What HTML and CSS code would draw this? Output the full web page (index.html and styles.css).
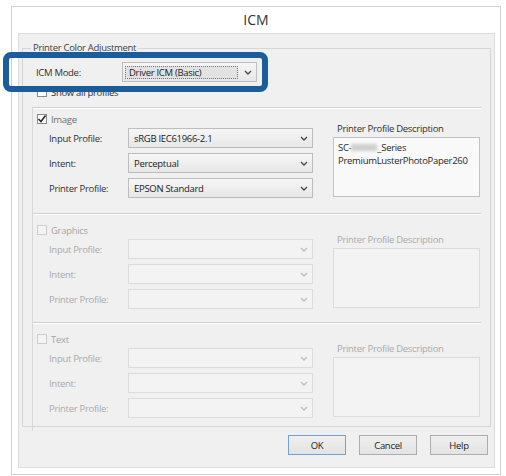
FILE: index.html
```html
<!DOCTYPE html>
<html>
<head>
    <title>ICM</title>
    <link rel="stylesheet" href="styles.css">
</head>
<body>
    <div class="window">
        <div class="titlebar">ICM</div>
        <div class="client">
            <fieldset class="group">
                <legend>Printer Color Adjustment</legend>
                <div class="mode-row">
                    <span class="mode-label">ICM Mode:</span>
                    <div class="combo mode-combo">
                        <span class="combo-text focused">Driver ICM (Basic)</span>
                        <svg class="chevron" width="8" height="5" viewBox="0 0 8 5"><polyline points="1,1 4,4 7,1"/></svg>
                    </div>
                </div>
                <div class="check-row show-all"><span class="box"></span>Show all profiles</div>

                <div class="sections">
                    <!-- Image -->
                    <div class="section image">
                        <div class="check-row heading"><span class="box">
                            <svg width="10" height="10" viewBox="0 0 10 10"><polyline points="1.5,5 4,7.5 8.5,1.5"/></svg>
                        </span>Image</div>
                        <div class="section-body">
                            <div class="fields">
                                <span class="field-label">Input Profile:</span>
                                <div class="combo"><span class="combo-text">sRGB IEC61966-2.1</span><svg class="chevron" width="8" height="5" viewBox="0 0 8 5"><polyline points="1,1 4,4 7,1"/></svg></div>
                                <span class="field-label">Intent:</span>
                                <div class="combo"><span class="combo-text">Perceptual</span><svg class="chevron" width="8" height="5" viewBox="0 0 8 5"><polyline points="1,1 4,4 7,1"/></svg></div>
                                <span class="field-label">Printer Profile:</span>
                                <div class="combo"><span class="combo-text">EPSON Standard</span><svg class="chevron" width="8" height="5" viewBox="0 0 8 5"><polyline points="1,1 4,4 7,1"/></svg></div>
                            </div>
                            <div class="desc">
                                <span class="desc-label">Printer Profile Description</span>
                                <div class="desc-box">SC-<span class="smudge"></span>_Series<br>PremiumLusterPhotoPaper260</div>
                            </div>
                        </div>
                    </div>

                    <!-- Graphics -->
                    <div class="section disabled">
                        <div class="check-row heading"><span class="box"></span>Graphics</div>
                        <div class="section-body">
                            <div class="fields">
                                <span class="field-label">Input Profile:</span>
                                <div class="combo"><span class="combo-text"></span><svg class="chevron" width="8" height="5" viewBox="0 0 8 5"><polyline points="1,1 4,4 7,1"/></svg></div>
                                <span class="field-label">Intent:</span>
                                <div class="combo"><span class="combo-text"></span><svg class="chevron" width="8" height="5" viewBox="0 0 8 5"><polyline points="1,1 4,4 7,1"/></svg></div>
                                <span class="field-label">Printer Profile:</span>
                                <div class="combo"><span class="combo-text"></span><svg class="chevron" width="8" height="5" viewBox="0 0 8 5"><polyline points="1,1 4,4 7,1"/></svg></div>
                            </div>
                            <div class="desc">
                                <span class="desc-label">Printer Profile Description</span>
                                <div class="desc-box"></div>
                            </div>
                        </div>
                    </div>

                    <!-- Text -->
                    <div class="section disabled">
                        <div class="check-row heading"><span class="box"></span>Text</div>
                        <div class="section-body">
                            <div class="fields">
                                <span class="field-label">Input Profile:</span>
                                <div class="combo"><span class="combo-text"></span><svg class="chevron" width="8" height="5" viewBox="0 0 8 5"><polyline points="1,1 4,4 7,1"/></svg></div>
                                <span class="field-label">Intent:</span>
                                <div class="combo"><span class="combo-text"></span><svg class="chevron" width="8" height="5" viewBox="0 0 8 5"><polyline points="1,1 4,4 7,1"/></svg></div>
                                <span class="field-label">Printer Profile:</span>
                                <div class="combo"><span class="combo-text"></span><svg class="chevron" width="8" height="5" viewBox="0 0 8 5"><polyline points="1,1 4,4 7,1"/></svg></div>
                            </div>
                            <div class="desc">
                                <span class="desc-label">Printer Profile Description</span>
                                <div class="desc-box"></div>
                            </div>
                        </div>
                    </div>
                </div>
            </fieldset>

            <div class="buttons">
                <button class="btn default">OK</button>
                <button class="btn">Cancel</button>
                <button class="btn">Help</button>
            </div>
        </div>
    </div>

    <div class="highlight"></div>
</body>
</html>
```

FILE: styles.css
```css
body {
    margin: 0;
    background-color: #fff;
    font-family: "Open Sans", "Noto Sans", sans-serif;
    font-size: 9.5px;
    letter-spacing: -0.3px;
    color: #303030;
}
.window {
    margin: 6px 0 0 11px;
    width: 490px;
    height: 469px;
    box-sizing: border-box;
    border: 1px solid #d2d2d2;
    background-color: #fff;
    display: flex;
    flex-direction: column;
}
.titlebar {
    height: 26px;
    line-height: 26px;
    text-align: center;
    font-size: 14px;
    letter-spacing: 0;
    color: #333;
}
.client {
    flex: 1;
    margin: 0 5px 6px 6px;
    padding: 0 3px;
    border: 1px solid #dcdcdc;
    background-color: #f0f0f0;
}

/* group box */
.group {
    margin: 7px 0 0 0;
    padding: 0 9px;
    height: 386px;
    box-sizing: border-box;
    min-width: 0;
    border: 1px solid #d6d6d6;
}
.group legend {
    margin-left: -1px;
    padding: 0 2px;
    line-height: 14px;
    color: #404040;
}
.mode-row {
    display: flex;
    align-items: center;
    height: 18px;
    margin-top: 8px;
    padding-left: 4px;
}
.mode-label {
    width: 86px;
}
.mode-combo {
    width: 135px;
    height: 17px;
}
.combo-text.focused {
    margin: 2px;
    padding-left: 3px;
    width: 108px;
    border: 1px dotted #777;
    background-color: #e2e2e2;
    line-height: 11px;
}

/* checkboxes */
.check-row {
    display: flex;
    align-items: center;
    gap: 4px;
}
.show-all {
    height: 10px;
    margin: 6px 0 0 5px;
}
.box {
    width: 10px;
    height: 10px;
    box-sizing: border-box;
    border: 1px solid #8a8a8a;
    background-color: #fff;
    display: flex;
}
.box svg {
    margin: -1px;
}
.box polyline {
    fill: none;
    stroke: #2a2a2a;
    stroke-width: 1.6;
}

/* profile sections */
.sections {
    margin-top: 10px;
    border-left: 1px solid #d8d8d8;
}
.section {
    border-top: 1px solid #d0d0d0;
    box-shadow: inset 0 1px #fff;
    padding: 7px 0 13px 4px;
}
.section.image {
    padding-top: 2px;
    padding-bottom: 15px;
}
.heading {
    height: 18px;
    color: #6e6e6e;
}
.section-body {
    display: flex;
    gap: 20px;
    padding-left: 12px;
}
.fields {
    display: grid;
    grid-template-columns: 79px 185px;
    grid-auto-rows: 20px;
    row-gap: 5px;
    align-items: center;
}
.combo {
    height: 20px;
    box-sizing: border-box;
    border: 1px solid #bdbdbd;
    background: linear-gradient(#f6f6f6, #e7e7e7);
    display: flex;
    align-items: center;
    justify-content: space-between;
    padding-right: 4px;
    color: #222;
}
.combo-text {
    padding-left: 5px;
}
.chevron polyline {
    fill: none;
    stroke: #4a4a4a;
    stroke-width: 1.4;
}
.desc {
    width: 147px;
    margin-top: -8px;
    display: flex;
    flex-direction: column;
}
.desc-label {
    line-height: 17px;
    padding-left: 4px;
}
.desc-box {
    height: 60px;
    box-sizing: border-box;
    border: 1px solid #c2c2c2;
    background-color: #f9f9f9;
    padding: 3px 4px;
    line-height: 13px;
    color: #2a2a2a;
}
.smudge {
    display: inline-block;
    width: 26px;
    height: 7px;
    background-color: #cfcfcf;
    filter: blur(1.5px);
}

/* greyed out sections */
.disabled {
    color: #ababab;
}
.disabled .heading {
    color: #a5a5a5;
}
.disabled .box {
    border-color: #cdcdcd;
    background-color: #f4f4f4;
}
.disabled .combo {
    border-color: #dcdcdc;
    background: #f3f3f3;
}
.disabled .chevron polyline {
    stroke: #bdbdbd;
}
.disabled .desc-box {
    border-color: #dcdcdc;
    background-color: #f3f3f3;
}

/* dialog buttons */
.buttons {
    display: flex;
    justify-content: flex-end;
    gap: 13px;
    margin: 8px 3px 0 0;
}
.btn {
    width: 58px;
    height: 20px;
    padding: 0;
    border: 1px solid #adadad;
    background: linear-gradient(#efefef, #e3e3e3);
    font-family: "Open Sans", "Noto Sans", sans-serif;
    font-size: 9.5px;
    letter-spacing: -0.3px;
    color: #222;
}
.btn.default {
    border-color: #6fa3d8;
}

/* callout around the ICM mode row */
.highlight {
    position: absolute;
    left: 3px;
    top: 52px;
    width: 265px;
    height: 40px;
    box-sizing: border-box;
    border: 6px solid #1b5d9b;
    border-radius: 8px;
}
```
